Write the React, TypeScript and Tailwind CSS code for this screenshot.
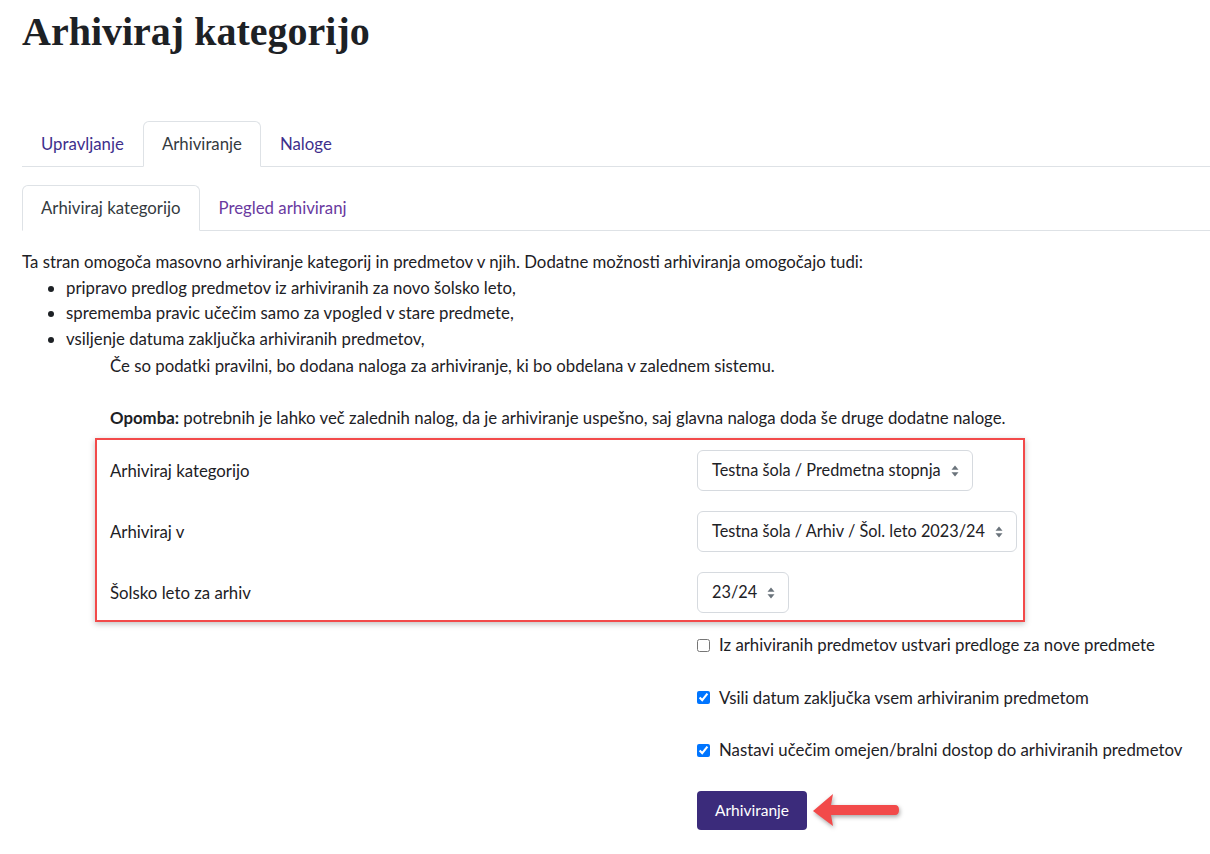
const font = { fontFamily: "Lato, 'Noto Sans', sans-serif" };

function SortArrows() {
  return (
    <svg width="8" height="12" viewBox="0 0 8 12" className="ml-[10px] shrink-0">
      <path d="M4 0.5 L7.5 4.8 H0.5 Z" fill="#6a737b" />
      <path d="M4 11.5 L7.5 7.2 H0.5 Z" fill="#6a737b" />
    </svg>
  );
}

function Select({ value }: { value: string }) {
  return (
    <div className="flex h-[41px] shrink-0 items-center rounded-[6px] border border-[#d6dadf] bg-white pl-[14px] pr-[13px] text-[16.3px] text-[#1d2125]">
      <span className="whitespace-nowrap">{value}</span>
      <SortArrows />
    </div>
  );
}

function Tab({ label, active, visited }: { label: string; active?: boolean; visited?: boolean }) {
  return (
    <div
      className={
        active
          ? "-mb-px rounded-t-[6px] border border-b-white border-[#dee2e6] bg-white px-[18px] text-[#343a40]"
          : "border border-transparent px-[18px] " + (visited ? "text-[#6a3aa0]" : "text-[#3e2f8c]")
      }
    >
      <div className="flex h-[43px] items-center">{label}</div>
    </div>
  );
}

function Check({ label, checked }: { label: string; checked?: boolean }) {
  return (
    <label className="flex h-[26px] items-center gap-[9px]">
      <input type="checkbox" defaultChecked={checked} className="m-0 h-[13px] w-[13px] accent-[#0075ff]" />
      <span>{label}</span>
    </label>
  );
}

function FormRow({ label, value }: { label: string; value: string }) {
  return (
    <div className="flex items-center">
      <div className="w-[587px] shrink-0">{label}</div>
      <Select value={value} />
    </div>
  );
}

export default function App() {
  return (
    <div className="min-h-[854px] bg-white pl-[22px] text-[16.8px] text-[#1d2125]" style={font}>
      <h1
        className="pt-[8px] text-[40px] font-bold leading-[48px] text-[#1d2125]"
        style={{ fontFamily: "'Liberation Serif', 'DejaVu Serif', serif" }}
      >
        Arhiviraj kategorijo
      </h1>

      {/* main tabs */}
      <div className="mt-[65px] flex border-b border-[#dee2e6]">
        <Tab label="Upravljanje" />
        <Tab label="Arhiviranje" active />
        <Tab label="Naloge" />
      </div>

      {/* sub tabs */}
      <div className="mt-[18px] flex border-b border-[#dee2e6]">
        <Tab label="Arhiviraj kategorijo" active />
        <Tab label="Pregled arhiviranj" visited />
      </div>

      <div className="mt-[18px] leading-[25.5px]">
        <p>
          Ta stran omogoča masovno arhiviranje kategorij in predmetov v njih. Dodatne možnosti arhiviranja omogočajo tudi:
        </p>
        <ul className="list-disc pl-[44px]">
          <li>pripravo predlog predmetov iz arhiviranih za novo šolsko leto,</li>
          <li>sprememba pravic učečim samo za vpogled v stare predmete,</li>
          <li>vsiljenje datuma zaključka arhiviranih predmetov,</li>
        </ul>
        <div className="mt-[2px] pl-[88px]">
          <p>Če so podatki pravilni, bo dodana naloga za arhiviranje, ki bo obdelana v zalednem sistemu.</p>
          <p className="mt-[26px]">
            <b>Opomba:</b> potrebnih je lahko več zalednih nalog, da je arhiviranje uspešno, saj glavna naloga doda še druge dodatne naloge.
          </p>
        </div>
      </div>

      {/* highlighted form rows */}
      <div className="ml-[73px] mt-[8px] w-[930px] border-2 border-[#f24a4a] pb-[7px] pl-[13px] pt-[10px] shadow-[0_2px_6px_rgba(0,0,0,0.25)]">
        <div className="flex flex-col gap-[20px]">
          <FormRow label="Arhiviraj kategorijo" value="Testna šola / Predmetna stopnja" />
          <FormRow label="Arhiviraj v" value="Testna šola / Arhiv / Šol. leto 2023/24" />
          <FormRow label="Šolsko leto za arhiv" value="23/24" />
        </div>
      </div>

      <div className="ml-[675px] mt-[10px] flex flex-col gap-[26.5px]">
        <Check label="Iz arhiviranih predmetov ustvari predloge za nove predmete" />
        <Check label="Vsili datum zaključka vsem arhiviranim predmetom" checked />
        <Check label="Nastavi učečim omejen/bralni dostop do arhiviranih predmetov" checked />
      </div>

      <div className="relative ml-[675px] mt-[28px] w-fit">
        <button className="h-[39px] rounded-[4px] bg-[#3b2b7b] px-[18px] text-[15.5px] text-white">Arhiviranje</button>
        <svg
          width="100"
          height="44"
          viewBox="0 0 100 44"
          className="pointer-events-none absolute left-[112px] top-[-3px] drop-shadow-[1px_2px_2px_rgba(0,0,0,0.35)]"
        >
          <path d="M4 23 L24 6 L22 17 L86 17 Q90 17 90 22 Q90 27 86 27 L22 27 L24 38 Z" fill="#f24a4a" />
        </svg>
      </div>
    </div>
  );
}
